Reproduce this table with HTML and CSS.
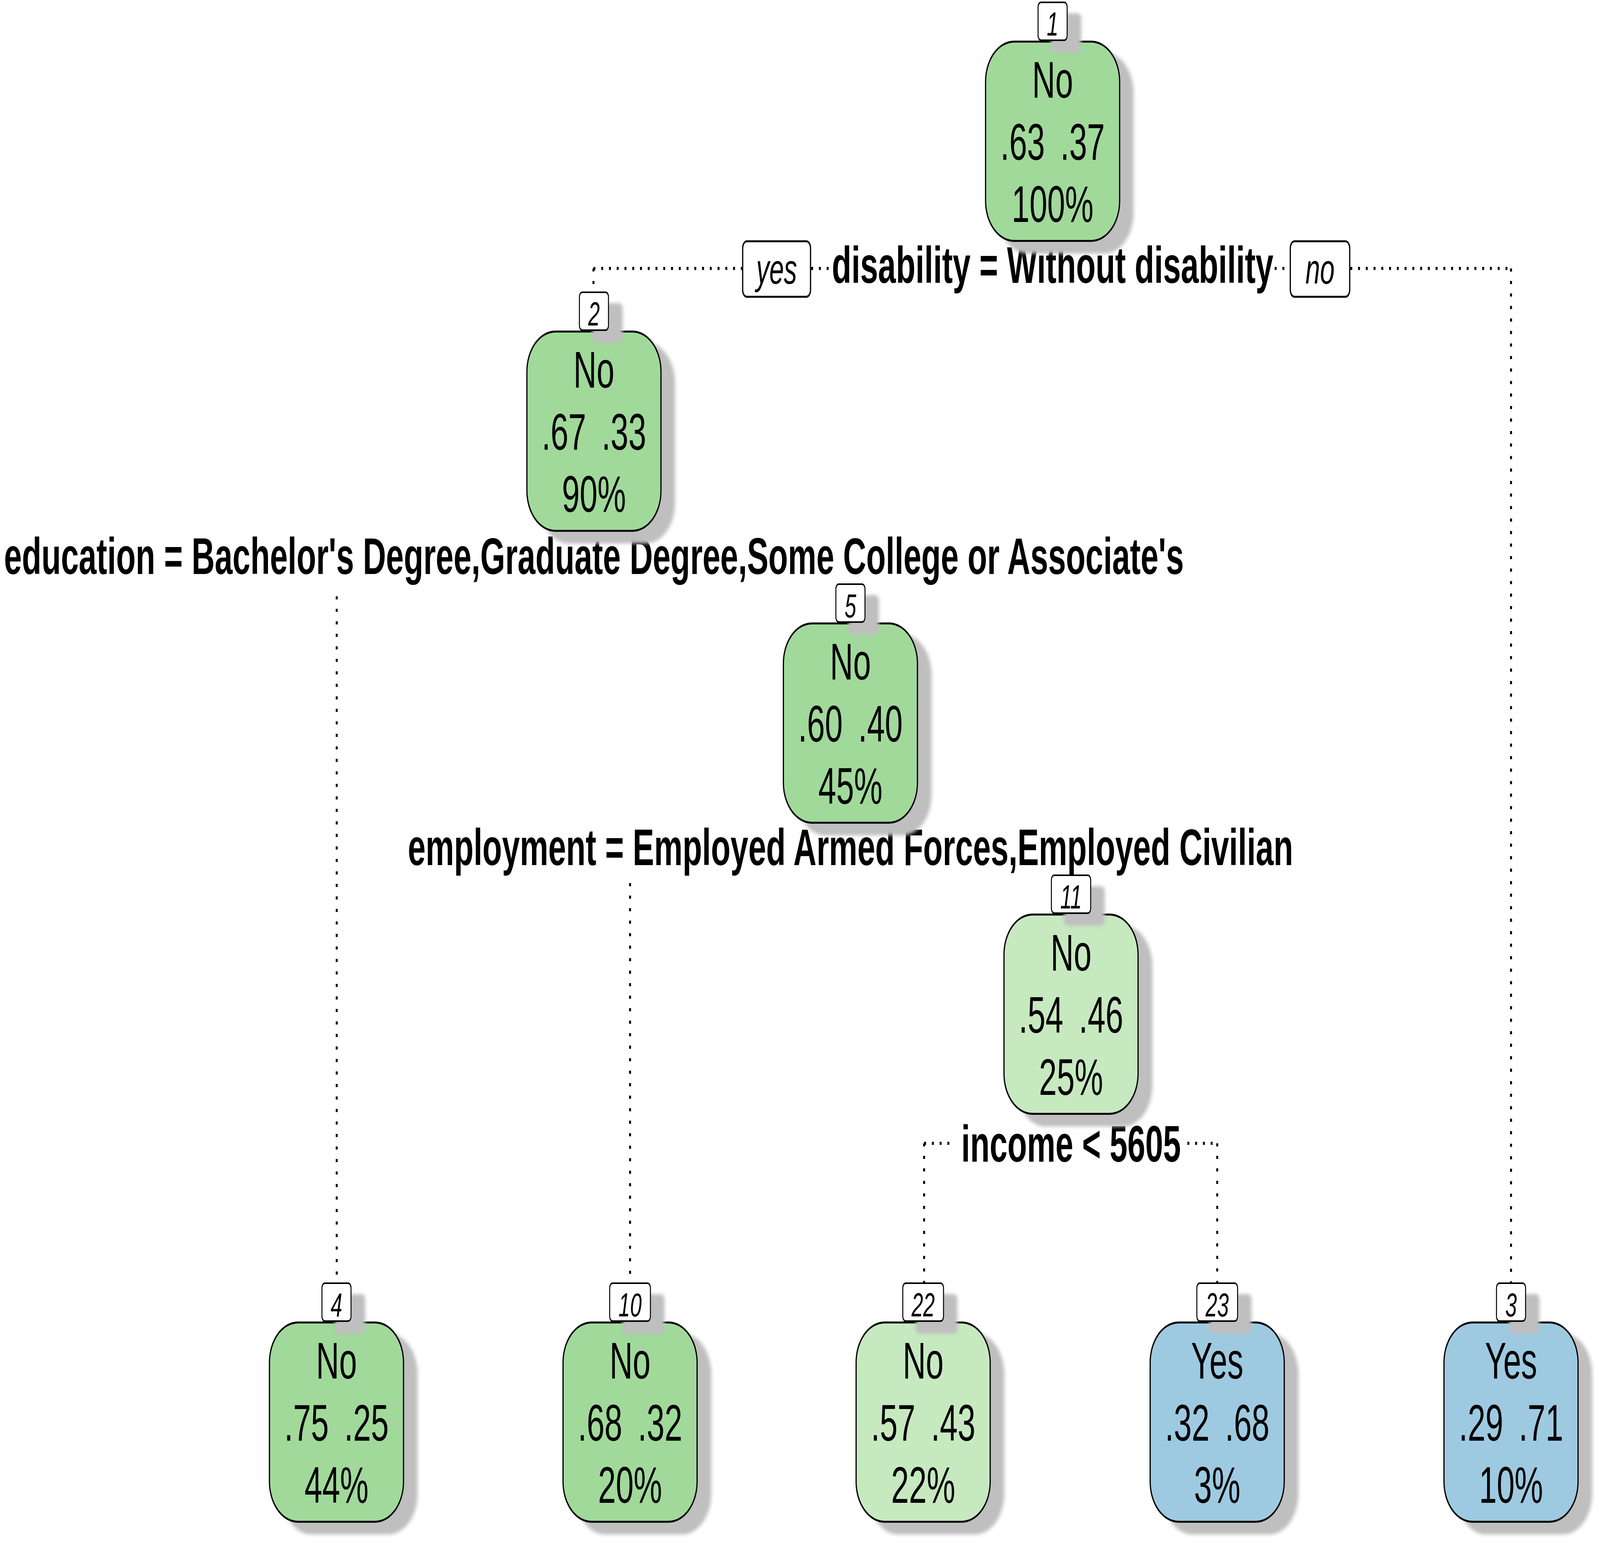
FILE: index.html
```html
<!DOCTYPE html>
<html lang="en">
<head>
<meta charset="utf-8">
<title>Decision tree</title>
<link rel="stylesheet" href="styles.css">
</head>
<body>
<div class="stage">
<div class="canvas" id="canvas">
  <svg class="edges" width="6600" height="3954" viewBox="0 0 6600 3954" xmlns="http://www.w3.org/2000/svg">
    <g class="dots">
      <line x1="2448" y1="687" x2="3061" y2="687"/>
      <line x1="3346" y1="687" x2="3428" y2="687"/>
      <line x1="5258" y1="687" x2="5320" y2="687"/>
      <line x1="5570" y1="687" x2="6233" y2="687"/>
      <line x1="2448" y1="687" x2="2448" y2="746"/>
      <line x1="6233" y1="687" x2="6233" y2="3282"/>
      <line x1="1389" y1="1526" x2="1389" y2="3282"/>
      <line x1="2599" y1="2260" x2="2599" y2="3282"/>
      <line x1="3812" y1="2926" x2="3938" y2="2926"/>
      <line x1="4898" y1="2926" x2="5021" y2="2926"/>
      <line x1="3812" y1="2926" x2="3812" y2="3282"/>
      <line x1="5021" y1="2926" x2="5021" y2="3282"/>
    </g>
  </svg>

  <div class="split" style="left:4342px; top:613px">disability = Without disability</div>
  <div class="branch yes">yes</div>
  <div class="branch no">no</div>
  <div class="split" style="left:2450px; top:1358px">education = Bachelor's Degree,Graduate Degree,Some College or Associate's</div>
  <div class="split" style="left:3508px; top:2103px">employment = Employed Armed Forces,Employed Civilian</div>
  <div class="split" style="left:4418px; top:2862px">income &lt; 5605</div>

  <div class="node" style="left:4063px; top:4px">
    <div class="nn">1</div>
    <div class="box green"><div>No</div><div class="probs"><span>.63</span><span>.37</span></div><div>100%</div></div>
  </div>
  <div class="node" style="left:2171px; top:746px">
    <div class="nn">2</div>
    <div class="box green"><div>No</div><div class="probs"><span>.67</span><span>.33</span></div><div>90%</div></div>
  </div>
  <div class="node" style="left:3229px; top:1493px">
    <div class="nn">5</div>
    <div class="box green"><div>No</div><div class="probs"><span>.60</span><span>.40</span></div><div>45%</div></div>
  </div>
  <div class="node" style="left:4139px; top:2238px">
    <div class="nn">11</div>
    <div class="box light"><div>No</div><div class="probs"><span>.54</span><span>.46</span></div><div>25%</div></div>
  </div>
  <div class="node" style="left:1109px; top:3282px">
    <div class="nn">4</div>
    <div class="box green"><div>No</div><div class="probs"><span>.75</span><span>.25</span></div><div>44%</div></div>
  </div>
  <div class="node" style="left:2320px; top:3282px">
    <div class="nn">10</div>
    <div class="box green"><div>No</div><div class="probs"><span>.68</span><span>.32</span></div><div>20%</div></div>
  </div>
  <div class="node" style="left:3529px; top:3282px">
    <div class="nn">22</div>
    <div class="box light"><div>No</div><div class="probs"><span>.57</span><span>.43</span></div><div>22%</div></div>
  </div>
  <div class="node" style="left:4742px; top:3282px">
    <div class="nn">23</div>
    <div class="box blue"><div>Yes</div><div class="probs"><span>.32</span><span>.68</span></div><div>3%</div></div>
  </div>
  <div class="node" style="left:5954px; top:3282px">
    <div class="nn">3</div>
    <div class="box blue"><div>Yes</div><div class="probs"><span>.29</span><span>.71</span></div><div>10%</div></div>
  </div>
</div>
</div>
<script src="script.js"></script>
</body>
</html>
```

FILE: styles.css
```css
html, body {
  margin: 0;
  padding: 0;
  background: #ffffff;
  overflow: hidden;
}

body {
  font-family: "Liberation Sans", Arial, sans-serif;
  color: #000000;
}

/* The drawing is authored on a 6600 x 3954 board and fitted to the window. */
.stage {
  width: 100vw;
  height: 100vh;
  overflow: hidden;
}

.canvas {
  position: relative;
  width: 6600px;
  height: 3954px;
  background: #ffffff;
  transform-origin: 0 0;
  transform: scale(var(--sx, 0.620606), var(--sy, 1));
}

.edges {
  position: absolute;
  left: 0;
  top: 0;
}

.dots line {
  stroke: #000000;
  stroke-width: 8;
  stroke-dasharray: 8 24;
  stroke-linecap: butt;
  fill: none;
}

.split {
  position: absolute;
  transform: translateX(-50%);
  white-space: nowrap;
  font-weight: bold;
  font-size: 132px;
  line-height: 132px;
}

.branch {
  position: absolute;
  top: 615px;
  height: 147px;
  box-sizing: border-box;
  border: 5px solid #000000;
  border-radius: 20px;
  background: #ffffff;
  display: flex;
  align-items: center;
  justify-content: center;
  font-style: italic;
  font-size: 108px;
  line-height: 108px;
}

.branch.yes {
  left: 3061px;
  width: 285px;
}

.branch.no {
  left: 5320px;
  width: 250px;
}

.node {
  position: absolute;
  width: 558px;
  display: flex;
  flex-direction: column;
  align-items: center;
}

.nn {
  position: relative;
  z-index: 2;
  height: 101px;
  box-sizing: border-box;
  padding: 10px 34px 0;
  border: 4px solid #000000;
  border-radius: 14px;
  background: #ffffff;
  font-style: italic;
  font-size: 86px;
  line-height: 87px;
  box-shadow: 55px 30px 12px #bfbfbf;
}

.box {
  position: relative;
  z-index: 1;
  margin-top: -1px;
  width: 558px;
  height: 515px;
  box-sizing: border-box;
  padding-top: 16px;
  border: 5px solid #000000;
  border-radius: 120px / 105px;
  text-align: center;
  font-size: 132px;
  line-height: 159px;
  box-shadow: 55px 30px 12px #bfbfbf;
}

.probs {
  display: flex;
  justify-content: center;
  gap: 64px;
}

.green {
  background: #a1d99b;
}

.light {
  background: #c7e9c0;
}

.blue {
  background: #9ecae1;
}
```

FILE: script.js
```js
(function () {
  var W = 6600, H = 3954;
  function fit() {
    var root = document.documentElement;
    root.style.setProperty('--sx', String(window.innerWidth / W));
    root.style.setProperty('--sy', String(window.innerHeight / H));
  }
  fit();
  window.addEventListener('resize', fit);
})();
```
